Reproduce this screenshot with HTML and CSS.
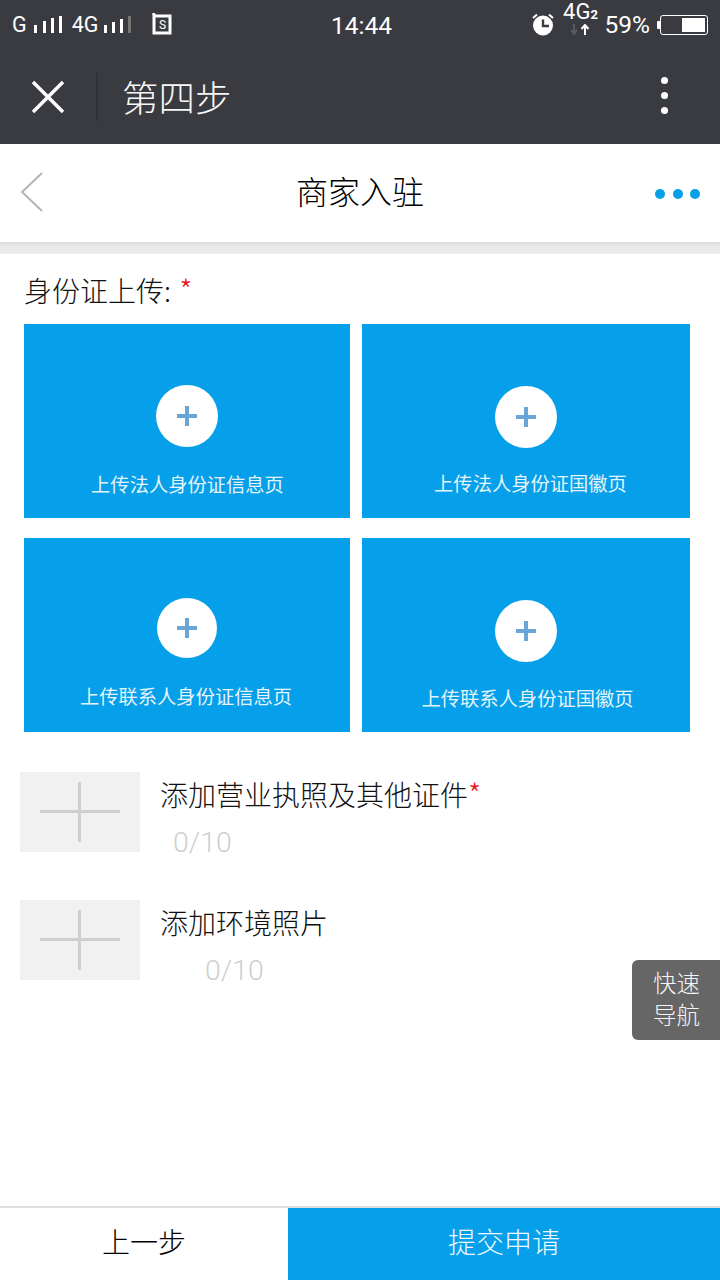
FILE: index.html
```html
<!DOCTYPE html>
<html lang="zh-CN">
<head>
<meta charset="utf-8">
<title>商家入驻</title>
<link rel="stylesheet" href="styles.css">
</head>
<body>
<div class="page">
  <div class="status">
    <div class="status-left">
      <span class="net">G</span>
      <svg class="bars" width="30" height="20" viewBox="0 0 30 20"><path d="M1 10h3v8H1zM10 6h3v12h-3zM18 3h3v15h-3zM26 1h3v17h-3z" fill="#fff"/></svg>
      <span class="net net2">4G</span>
      <svg class="bars bars2" width="30" height="20" viewBox="0 0 30 20"><path d="M2 10h3v8H2zM10 7h3v11h-3zM18 4h3v14h-3z" fill="#fff"/><path d="M26 1h3v17h-3z" fill="#777"/></svg>
      <svg class="sim" width="20" height="22" viewBox="0 0 20 22"><path d="M1 0 3 3h15v17H2V2" fill="none" stroke="#fff" stroke-width="3"/><text x="10.500" y="16" font-size="12" fill="#fff" text-anchor="middle" font-family="Roboto, sans-serif">S</text></svg>
    </div>
    <div class="clock">14:44</div>
    <div class="status-right">
      <svg class="alarm" width="24" height="24" viewBox="0 0 24 24"><path d="M2 6 6 2.500M22 6l-4-3.500" stroke="#fff" stroke-width="2" fill="none"/><circle cx="12" cy="13.500" r="10" fill="#fff"/><path d="M12 7.500v6.500h6" stroke="#3a3b41" stroke-width="2.400" fill="none"/></svg>
      <div class="lte">
        <span class="lte-text">4G<small>2</small></span>
        <svg width="22" height="12" viewBox="0 0 22 12"><path d="M4 0v8M1 6l3 4 3-4" stroke="#5a5b60" stroke-width="2" fill="none"/><path d="M15 11V3M11.500 5 15 1l3.500 4" stroke="#fff" stroke-width="2" fill="none"/></svg>
      </div>
      <span class="pct">59%</span>
      <div class="battery-nub"></div>
      <div class="battery"><div class="battery-fill"></div></div>
    </div>
  </div>

  <div class="wx">
    <svg class="wx-close" width="34" height="34" viewBox="0 0 34 34"><path d="M2 2l30 30M32 2 2 32" stroke="#fff" stroke-width="3.500" fill="none"/></svg>
    <div class="wx-sep"></div>
    <div class="wx-title">第四步</div>
    <div class="wx-more"><i></i><i></i><i></i></div>
  </div>

  <header class="app-head">
    <svg class="back" width="24" height="40" viewBox="0 0 24 40"><path d="M22 1 2 20l20 19" stroke="#b4b4b4" stroke-width="2" fill="none"/></svg>
    <div class="app-title">商家入驻</div>
    <div class="app-more"><i></i><i></i><i></i></div>
  </header>
  <div class="band"></div>

  <main class="content">
    <div class="label">身份证上传: <span class="req">*</span></div>
    <div class="cards">
      <div class="card card-a"><div class="circle"><span class="plus"></span></div><div class="card-text">上传法人身份证信息页</div></div>
      <div class="card card-b"><div class="circle"><span class="plus"></span></div><div class="card-text">上传法人身份证国徽页</div></div>
      <div class="card card-c"><div class="circle"><span class="plus"></span></div><div class="card-text">上传联系人身份证信息页</div></div>
      <div class="card card-d"><div class="circle"><span class="plus"></span></div><div class="card-text">上传联系人身份证国徽页</div></div>
    </div>

    <div class="upload">
      <div class="thumb"></div>
      <div class="upload-body">
        <div class="upload-title">添加营业执照及其他证件<span class="req">*</span></div>
        <div class="count">0/10</div>
      </div>
    </div>
    <div class="upload upload-env">
      <div class="thumb"></div>
      <div class="upload-body">
        <div class="upload-title">添加环境照片</div>
        <div class="count">0/10</div>
      </div>
    </div>
  </main>

  <div class="quick">快速<br>导航</div>

  <footer class="foot">
    <div class="prev">上一步</div>
    <div class="submit">提交申请</div>
  </footer>
</div>
</body>
</html>
```
FILE: styles.css
```css
* { box-sizing: border-box; }
html, body { margin: 0; padding: 0; }
body {
  width: 720px;
  height: 1280px;
  overflow: hidden;
  background: #fff;
  font-family: "Noto Sans CJK SC", "Liberation Sans", sans-serif;
  font-weight: 300;
  color: #000;
}
.page { position: relative; width: 720px; height: 1280px; display: flex; flex-direction: column; }

.status { height: 50px; background: #3a3b41; color: #fff; display: flex; align-items: center; position: relative; font-family: Roboto, "Liberation Sans", sans-serif; font-weight: 400; padding-left: 12px; }
.status-left { display: flex; align-items: center; height: 50px; }
.net { font-size: 21.500px; line-height: 54px; }
.net2 { margin-left: 9px; }
.bars { margin-left: 6px; margin-top: 0; }
.bars2 { margin-left: 4px; }
.sim { margin-left: 20px; margin-top: -2px; }
.clock { position: absolute; left: 331px; top: 1px; font-size: 24.500px; line-height: 50px; }
.status-right { margin-left: auto; display: flex; align-items: center; padding-right: 40px; height: 50px; }
.alarm { margin-top: -2px; }
.lte { display: flex; flex-direction: column; align-items: center; margin: -12px 1px 0 8px; width: 36px; }
.lte-text { font-size: 22px; line-height: 20px; white-space: nowrap; }
.lte-text small { font-size: 13px; font-weight: 700; }
.lte svg { display: block; margin-top: -1px; }
.pct { font-size: 24.500px; margin-left: 5px; line-height: 52px; }
.battery-nub { width: 3px; height: 8px; background: #fff; margin-left: 7px; border-radius: 1px 0 0 1px; }
.battery { width: 48px; height: 20px; border: 1.500px solid #fff; border-radius: 3px; padding: 2px; display: flex; justify-content: flex-end; margin-right: -28px; }
.battery-fill { width: 23px; background: #fff; }

.wx { height: 94px; background: #3a3b41; display: flex; align-items: center; position: relative; }
.wx-close { margin-left: 31px; }
.wx-sep { width: 2px; height: 48px; background: #313238; margin-left: 31px; }
.wx-title { color: #f7f7f7; font-size: 36.500px; margin-left: 24px; line-height: 50px; font-weight: 300; }
.wx-more { margin-left: auto; margin-right: 52px; margin-bottom: 4px; display: flex; flex-direction: column; gap: 8px; }
.wx-more i { display: block; width: 7px; height: 7px; border-radius: 50%; background: #fff; }

.app-head { height: 98px; background: #fff; display: flex; align-items: center; position: relative; padding: 0 20px; }
.back { display: block; margin-top: -2px; }
.app-title { position: absolute; left: 0; right: 0; top: -3px; text-align: center; font-size: 32px; line-height: 98px; }
.app-more { margin-left: auto; display: flex; gap: 7.500px; margin-top: 2px; }
.app-more i { display: block; width: 10px; height: 10px; border-radius: 50%; background: #079fe8; }
.band { height: 12px; background: linear-gradient(#dcdcdc, #e9e9e9 40%, #ebebeb); }

.content { flex: 1; padding: 0 30px 0 0; }
.label { font-size: 28px; line-height: 38px; margin: 17px 0 0 24px; color: #111; }
.label .req { font-size: 30px; margin-left: 2px; line-height: 30px; }
.req { color: #e4161c; }
.cards { display: grid; grid-template-columns: 326px 328px; grid-template-rows: 194px 194px; column-gap: 12px; row-gap: 20px; margin: 15px 0 0 24px; }
.card { background: #069fe9; display: flex; flex-direction: column; align-items: center; color: #e4f4fc; }
.circle { width: 62px; height: 62px; border-radius: 50%; background: #fff; display: flex; align-items: center; justify-content: center; }
.plus { display: block; width: 20px; height: 20px; background: linear-gradient(#6aa5d6, #6aa5d6) center / 20px 4px no-repeat, linear-gradient(#6aa5d6, #6aa5d6) center / 4px 20px no-repeat; }
.card-text { font-size: 19.300px; line-height: 28px; white-space: nowrap; margin-top: 23px; font-weight: 400; margin-left: 1px; }
.card-a { padding: 61px 0 0 0; }
.card-b { padding: 62px 0 0 0; }
.card-b .card-text { margin-left: 9px; margin-top: 21px; }
.card-c { padding: 60px 0 0 0; }
.card-c .circle { width: 60px; height: 60px; }
.card-c .card-text { margin-top: 24px; margin-left: -2px; }
.card-d { padding: 62px 0 0 0; }
.card-d .card-text { margin-top: 22px; margin-left: 3px; }

.upload { display: flex; height: 80px; margin: 40px 0 0 20px; }
.upload-env { margin-top: 48px; }
.thumb { width: 120px; height: 80px; background: linear-gradient(#cfcfcf, #cfcfcf) 20px 38px / 80px 3px no-repeat, linear-gradient(#cfcfcf, #cfcfcf) 58px 10px / 3px 60px no-repeat, #f1f1f1; }
.upload-body { margin-left: 20px; }
.upload-title { font-size: 28px; line-height: 40px; margin-top: 2px; white-space: nowrap; color: #111; }
.upload-title .req { font-size: 30px; line-height: 30px; }
.count { font-family: Roboto, "Liberation Sans", sans-serif; font-weight: 300; font-size: 28.500px; line-height: 36px; color: #cfcfcf; margin: 11px 0 0 13px; }
.upload-env .count { margin-left: 45px; }

.quick { position: absolute; right: 0; top: 960px; width: 88px; height: 80px; background: #666; color: #f5f5f5; border-radius: 6px 0 0 6px; font-size: 23.500px; line-height: 32px; padding: 6px 0 0 21px; }

.foot { height: 74px; border-top: 2px solid #e0e0e0; display: flex; background: #fff; }
.prev { width: 288px; text-align: center; font-size: 28px; line-height: 66px; }
.submit { flex: 1; background: #069fe9; color: #eef9ff; text-align: center; font-size: 28px; line-height: 66px; }
```
